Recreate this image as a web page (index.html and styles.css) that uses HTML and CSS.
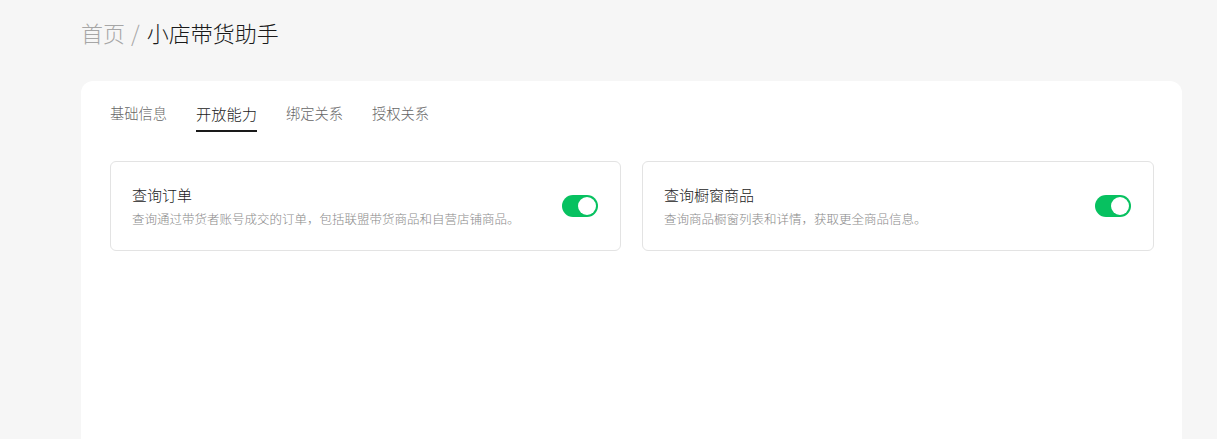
FILE: index.html
```html
<!DOCTYPE html>
<html lang="zh-CN">
<head>
<meta charset="utf-8">
<title>小店带货助手</title>
<link rel="stylesheet" href="styles.css">
</head>
<body>
<div class="page">
  <div class="breadcrumb"><span class="crumb-home">首页</span><span class="crumb-sep">/</span><span class="crumb-current">小店带货助手</span></div>
  <div class="panel">
    <div class="tabs">
      <div class="tab">基础信息</div>
      <div class="tab active">开放能力</div>
      <div class="tab">绑定关系</div>
      <div class="tab">授权关系</div>
    </div>
    <div class="items">
      <div class="item">
        <div class="item-text">
          <div class="item-title">查询订单</div>
          <div class="item-desc">查询通过带货者账号成交的订单，包括联盟带货商品和自营店铺商品。</div>
        </div>
        <div class="switch on"><span class="knob"></span></div>
      </div>
      <div class="item">
        <div class="item-text">
          <div class="item-title">查询橱窗商品</div>
          <div class="item-desc">查询商品橱窗列表和详情，获取更全商品信息。</div>
        </div>
        <div class="switch on"><span class="knob"></span></div>
      </div>
    </div>
  </div>
</div>
</body>
</html>
```

FILE: styles.css
```css
* { box-sizing: border-box; }
html, body { margin: 0; padding: 0; }
body {
  background: #f6f6f6;
  font-family: "Noto Sans CJK SC", "Noto Sans", sans-serif;
  color: #1a1a1a;
  overflow: hidden;
}
.page {
  padding: 17px 0 0 81px;
}
.breadcrumb {
  font-size: 22px;
  line-height: 30px;
  height: 30px;
  display: flex;
  align-items: center;
  font-weight: 300;
}
.crumb-home { color: #a6a6a6; }
.crumb-sep { color: #a6a6a6; margin: 0 7px 0 6px; }
.crumb-current { color: #1a1a1a; }
.panel {
  margin-top: 34px;
  width: 1101px;
  min-height: 500px;
  background: #fff;
  border-radius: 12px;
  padding: 22px 28px 0 29px;
}
.tabs {
  display: flex;
  align-items: flex-end;
  gap: 29px;
}
.tab {
  font-size: 14.25px;
  line-height: 20px;
  color: #666;
  font-weight: 300;
  padding-bottom: 7px;
  border-bottom: 2px solid transparent;
}
.tab.active {
  font-size: 15.25px;
  color: #1a1a1a;
  border-bottom-color: #1a1a1a;
}
.items {
  margin-top: 29px;
  display: grid;
  grid-template-columns: 511px 512px;
  gap: 21px;
}
.item {
  height: 90px;
  border: 1px solid #e3e3e3;
  border-radius: 6px;
  display: flex;
  align-items: center;
  justify-content: space-between;
  padding: 0 22px 0 21px;
}
.item-title {
  font-size: 15px;
  line-height: 22px;
  color: #1a1a1a;
  font-weight: 300;
}
.item-desc {
  margin-top: 4px;
  font-size: 12.5px;
  line-height: 18px;
  color: #8a8a8a;
  font-weight: 300;
}
.switch {
  position: relative;
  width: 36px;
  height: 22px;
  border-radius: 11px;
  background: #ccc;
  flex-shrink: 0;
}
.switch.on { background: #07c160; }
.knob {
  position: absolute;
  top: 2px;
  left: 2px;
  width: 18px;
  height: 18px;
  border-radius: 50%;
  background: #fff;
}
.switch.on .knob { left: 16px; }
```
